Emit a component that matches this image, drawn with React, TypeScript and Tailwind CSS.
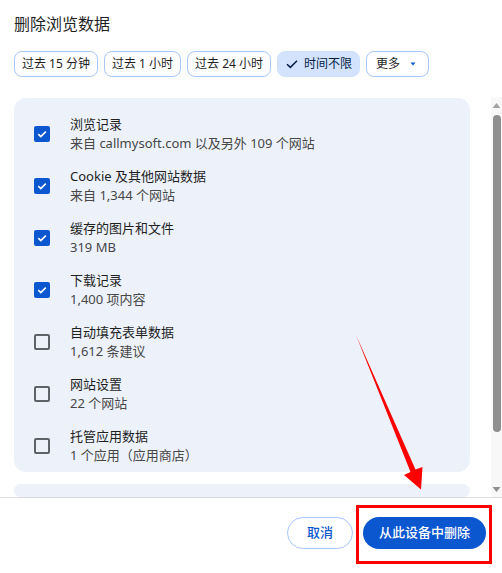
import React from "react";

const items = [
  { t: "浏览记录", s: "来自 callmysoft.com 以及另外 109 个网站", c: true },
  { t: "Cookie 及其他网站数据", s: "来自 1,344 个网站", c: true },
  { t: "缓存的图片和文件", s: "319 MB", c: true },
  { t: "下载记录", s: "1,400 项内容", c: true },
  { t: "自动填充表单数据", s: "1,612 条建议", c: false },
  { t: "网站设置", s: "22 个网站", c: false },
  { t: "托管应用数据", s: "1 个应用（应用商店）", c: false },
];

function Box({ checked }: { checked: boolean }) {
  if (checked)
    return (
      <div className="w-4 h-4 rounded-[2px] bg-[#0b57d0] flex items-center justify-center shrink-0">
        <svg width="12" height="12" viewBox="0 0 12 12">
          <path d="M2.3 6.2 L4.8 8.6 L9.8 3.6" fill="none" stroke="white" strokeWidth="1.6" />
        </svg>
      </div>
    );
  return <div className="w-4 h-4 rounded-[2px] border-2 border-[#5f6368] shrink-0" />;
}

function Chip({ children, selected }: { children: React.ReactNode; selected?: boolean }) {
  return (
    <div
      className={
        selected
          ? "h-[26px] px-[7px] rounded-[8px] bg-[#d3e3fd] border border-[#d3e3fd] text-[#041e49] flex items-center text-[12px]"
          : "h-[26px] px-[7px] rounded-[8px] border border-[#a8c7fa] text-[#1f1f1f] flex items-center text-[12px]"
      }
    >
      {children}
    </div>
  );
}

export default function App() {
  return (
    <div
      className="relative w-[502px] h-[573px] bg-white overflow-hidden"
      style={{ fontFamily: '"Noto Sans", "Noto Sans CJK SC", sans-serif' }}
    >
      <div className="pl-[14px] pt-[12px] h-[36px] text-[16px] leading-[24px] text-[#1f1f1f]">删除浏览数据</div>
      <div className="pl-[14px] mt-[15px] flex gap-[6px]">
        <Chip>过去 15 分钟</Chip>
        <Chip>过去 1 小时</Chip>
        <Chip>过去 24 小时</Chip>
        <Chip selected>
          <svg width="14" height="14" viewBox="0 0 14 14" className="mr-[5px]">
            <path d="M2 7.2 L5.4 10.4 L12 3.8" fill="none" stroke="#041e49" strokeWidth="1.5" />
          </svg>
          时间不限
        </Chip>
        <Chip>
          <span className="pl-[2px]">更多</span>
          <svg width="8" height="6" viewBox="0 0 8 6" className="ml-[9px] mr-[4px]">
            <path d="M1.5 1.5 L6.5 1.5 L4 4.5 Z" fill="#0b57d0" />
          </svg>
        </Chip>
      </div>
      <div className="mt-[20px] h-[400px] flex justify-between overflow-hidden">
        <div className="pl-[14px] pt-[1px] flex flex-col gap-[12px]">
          <div className="w-[456px] h-[383px] rounded-[12px] bg-[#edf2fa] pt-[10px] pl-[20px]">
            {items.map((it) => (
              <div key={it.t} className="h-[52px] flex items-center gap-[20px]">
                <Box checked={it.c} />
                <div className="flex flex-col">
                  <div className="text-[13px] leading-[19px] text-[#1f1f1f]">{it.t}</div>
                  <div className="text-[13px] leading-[19px] text-[#474747]">{it.s}</div>
                </div>
              </div>
            ))}
          </div>
          <div className="w-[456px] h-[100px] rounded-[12px] bg-[#edf2fa]" />
        </div>
        <div className="w-[11px] h-[400px] bg-[#f8f8f8] flex flex-col items-center">
          <svg width="9" height="7" viewBox="0 0 9 7" className="mt-[5px]">
            <path d="M0.5 6 L4.5 1 L8.5 6 Z" fill="#a3a3a3" />
          </svg>
          <div className="mt-[6px] w-[8px] h-[317px] rounded-[4px] bg-[#8f8f8f]" />
          <div className="flex-1" />
          <svg width="9" height="7" viewBox="0 0 9 7" className="mb-[4px]">
            <path d="M0.5 1 L4.5 6 L8.5 1 Z" fill="#8f8f8f" />
          </svg>
        </div>
      </div>
      <div className="h-px bg-[#dadce0]" />
      <div className="flex justify-end gap-[10px] pr-[16px] pt-[19px]">
        <button className="h-8 w-[66px] rounded-full border border-[#a8c7fa] text-[#0b57d0] text-[13px] font-medium flex items-center justify-center">
          取消
        </button>
        <button className="h-8 w-[123px] rounded-full bg-[#0b57d0] text-white text-[13px] font-medium flex items-center justify-center">
          从此设备中删除
        </button>
      </div>
      <div className="absolute left-[356px] top-[505px] w-[136px] h-[59px] border-[3px] border-[#ff0000]" />
      <svg className="absolute left-0 top-0 pointer-events-none" width="502" height="573" viewBox="0 0 502 573">
        <polygon
          points="356,335 415.5,469.5 422.5,467 421,489.5 404,475 410.5,472"
          fill="#ff0000"
        />
      </svg>
    </div>
  );
}
